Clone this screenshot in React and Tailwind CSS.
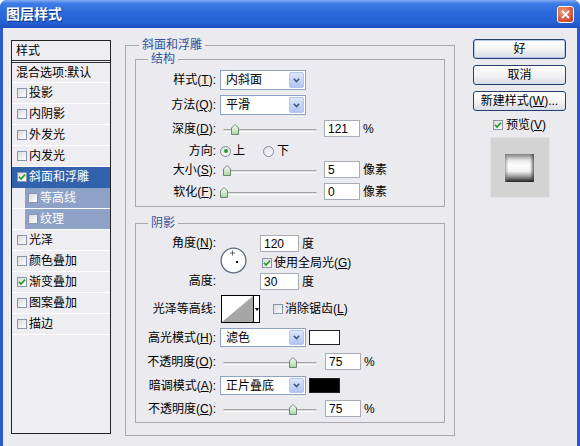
import React from 'react';

const F = "font-['Liberation_Sans','Noto_Sans_CJK_SC',sans-serif]";

function Box({ on, className = '' }) {
  return (
    <span className={`flex h-[10px] w-[10px] shrink-0 items-center justify-center border border-[#8796ac] bg-linear-to-br from-[#dadada] to-white ${className}`}>
      {on && (
        <svg width="8" height="8" viewBox="0 0 8 8">
          <path d="M1 3.8 L3 6 L7 1.6" fill="none" stroke="#22a12a" strokeWidth="1.7" />
        </svg>
      )}
    </span>
  );
}

function Radio({ on, className = '' }) {
  return (
    <span className={`flex h-[11px] w-[11px] shrink-0 items-center justify-center rounded-full border border-[#7b8ba3] bg-linear-to-br from-[#dcdcdc] to-white ${className}`}>
      {on && <span className="h-[4px] w-[4px] rounded-full bg-[#2a9a2e]" />}
    </span>
  );
}

function Field({ value, className = 'w-[36px]' }) {
  return (
    <div className={`flex h-[17px] shrink-0 items-center border border-[#a7adb6] bg-white pl-[3px] text-[12px] leading-none ${className}`}>
      {value}
    </div>
  );
}

function Select({ value, className = 'h-[20px]' }) {
  return (
    <div className={`flex w-[86px] shrink-0 border border-[#8ea3c0] bg-white ${className}`}>
      <span className="flex flex-1 items-center pl-[5px]">{value}</span>
      <span className="m-[1px] flex w-[15px] items-center justify-center rounded-[2px] border border-[#b4c6ee] bg-linear-to-b from-[#dde7fc] to-[#b0c5f0]">
        <svg width="7" height="5" viewBox="0 0 7 5">
          <path d="M0.8 0.8 L3.5 3.6 L6.2 0.8" fill="none" stroke="#3e5683" strokeWidth="1.5" />
        </svg>
      </span>
    </div>
  );
}

function Slider({ at }) {
  return (
    <div className="relative h-[17px] w-[97px] shrink-0">
      <div className="absolute left-[3px] right-0 top-[9px] h-[3px] rounded-full border-t border-[#a3a3a6] border-b border-b-white bg-[#dadada]" />
      <svg className="absolute top-[4px]" style={{ left: at - 4 }} width="8" height="11" viewBox="0 0 8 11">
        <defs>
          <linearGradient id="thumb" x1="0" y1="0" x2="0" y2="1">
            <stop offset="0" stopColor="#ffffff" />
            <stop offset="1" stopColor="#a9d4a2" />
          </linearGradient>
        </defs>
        <path d="M0.5 4 L4 0.5 L7.5 4 L7.5 10.5 L0.5 10.5 Z" fill="url(#thumb)" stroke="#6d8773" />
      </svg>
    </div>
  );
}

function Btn({ children, def }) {
  return (
    <div
      className={`flex h-[20px] w-[93px] items-center justify-center rounded-[3px] border border-[#25406f] bg-[linear-gradient(to_bottom,#ffffff,#f2f2f2_55%,#d6dce8)] ${
        def ? 'shadow-[inset_0_0_0_1px_#b2c8ee]' : ''
      }`}
    >
      {children}
    </div>
  );
}

const items = [
  { t: '投影' },
  { t: '内阴影' },
  { t: '外发光' },
  { t: '内发光' },
  { t: '斜面和浮雕', on: true, sel: true },
  { t: '等高线', sub: true },
  { t: '纹理', sub: true },
  { t: '光泽' },
  { t: '颜色叠加' },
  { t: '渐变叠加', on: true },
  { t: '图案叠加' },
  { t: '描边' },
];

function StyleList() {
  return (
    <div className="flex h-[394px] w-[100px] shrink-0 flex-col border border-[#222] bg-[#eeedf1]">
      <div className="flex h-[20px] items-center border-b border-[#333] pl-[4px]">样式</div>
      <div className="mt-[1px] flex h-[21px] items-center border-t border-[#333] border-b border-b-white pl-[4px]">混合选项:默认</div>
      {items.map((it) =>
        it.sub ? (
          <div key={it.t} className="flex h-[21px] border-b border-white pl-[13px]">
            <div className="flex flex-1 items-center bg-[#8ea1c6] pl-[3px] text-white">
              <Box />
              <span className="ml-[2px]">{it.t}</span>
            </div>
          </div>
        ) : (
          <div
            key={it.t}
            className={`flex h-[21px] items-center border-b pl-[5px] ${
              it.sel ? 'border-[#3162ab] bg-[#3162ab] text-white' : 'border-white'
            }`}
          >
            <Box on={it.on} />
            <span className="ml-[2px]">{it.t}</span>
          </div>
        )
      )}
    </div>
  );
}

function Label({ children }) {
  return <span className="w-[80px] shrink-0 text-right">{children}</span>;
}

export default function App() {
  return (
    <div className={`${F} flex h-[446px] w-[580px] flex-col overflow-hidden rounded-t-[7px] bg-[#2a5bcc] text-[12px] text-black`}>
      <div className="flex h-[28px] shrink-0 items-center justify-between bg-[linear-gradient(to_bottom,#83acf2_0%,#3e7ce6_12%,#2b69dc_45%,#2462d6_80%,#1c50c0_100%)] pl-[6px] pr-[6px]">
        <span className="text-[14px] font-bold text-white [text-shadow:1px_1px_0_#0d2f86]">图层样式</span>
        <span className="flex h-[17px] w-[17px] items-center justify-center rounded-[3px] border border-white bg-[radial-gradient(circle_at_35%_30%,#f29a7a,#d9573a_60%,#b8401f)]">
          <svg width="9" height="9" viewBox="0 0 9 9">
            <path d="M1 1 L8 8 M8 1 L1 8" stroke="#fff" strokeWidth="1.8" />
          </svg>
        </span>
      </div>

      <div className="mx-[3px] flex flex-1 bg-[#ebeaee] pl-[8px] pt-[12px]">
        <StyleList />

        {/* middle panel */}
        <fieldset className="ml-[14px] mt-[-2px] h-fit w-[330px] shrink-0 border border-[#a9a8ad] px-[9px] pb-[12px]">
          <legend className="ml-[4px] bg-[#ebeaee] px-[3px] leading-[14px] text-[#2f55a0]">斜面和浮雕</legend>

          <fieldset className="border border-[#a9a8ad] pb-[6px] pt-[4px]">
            <legend className="ml-[12px] bg-[#ebeaee] px-[3px] leading-[14px] text-[#2f55a0]">结构</legend>
            <div className="flex h-[20px] items-center">
              <Label>样式(<u>T</u>):</Label>
              <Select value="内斜面" className="ml-[4px] h-[20px]" />
            </div>
            <div className="mt-[5px] flex h-[20px] items-center">
              <Label>方法(<u>Q</u>):</Label>
              <Select value="平滑" className="ml-[4px] h-[20px]" />
            </div>
            <div className="mt-[5px] flex h-[17px] items-center">
              <Label>深度(<u>D</u>):</Label>
              <div className="ml-[4px]"><Slider at={15} /></div>
              <Field value="121" className="ml-[7px] w-[36px]" />
              <span className="ml-[3px]">%</span>
            </div>
            <div className="mt-[4px] flex h-[20px] items-center">
              <Label>方向:</Label>
              <Radio on className="ml-[4px]" />
              <span className="ml-[2px]">上</span>
              <Radio className="ml-[18px]" />
              <span className="ml-[3px]">下</span>
            </div>
            <div className="flex h-[17px] items-center">
              <Label>大小(<u>S</u>):</Label>
              <div className="ml-[4px]"><Slider at={7} /></div>
              <Field value="5" className="ml-[7px] w-[36px]" />
              <span className="ml-[3px]">像素</span>
            </div>
            <div className="mt-[5px] flex h-[17px] items-center">
              <Label>软化(<u>F</u>):</Label>
              <div className="ml-[4px]"><Slider at={4} /></div>
              <Field value="0" className="ml-[7px] w-[36px]" />
              <span className="ml-[3px]">像素</span>
            </div>
          </fieldset>

          <fieldset className="mt-[9px] border border-[#a9a8ad] pb-[5px] pt-[5px]">
            <legend className="ml-[12px] bg-[#ebeaee] px-[3px] leading-[14px] text-[#2f55a0]">阴影</legend>
            <div className="flex h-[55px]">
              <div className="flex w-[80px] shrink-0 flex-col justify-between text-right">
                <span className="leading-[17px]">角度(<u>N</u>):</span>
                <span className="leading-[17px]">高度:</span>
              </div>
              <svg className="ml-[4px] mt-[12px] shrink-0" width="27" height="27" viewBox="0 0 27 27">
                <circle cx="13.5" cy="13.5" r="12.4" fill="#fff" stroke="#5d6b7e" strokeWidth="1.3" />
                <path d="M12.5 3.5 V8.5 M10 6 H15" stroke="#555" strokeWidth="0.9" />
                <rect x="16" y="14" width="2" height="2" fill="#111" />
              </svg>
              <div className="ml-[13px] flex flex-col">
                <div className="flex h-[17px] items-center">
                  <Field value="120" className="w-[39px]" />
                  <span className="ml-[3px]">度</span>
                </div>
                <div className="flex h-[21px] items-center">
                  <Box on className="ml-[2px]" />
                  <span className="ml-[2px]">使用全局光(<u>G</u>)</span>
                </div>
                <div className="flex h-[17px] items-center">
                  <Field value="30" className="w-[39px]" />
                  <span className="ml-[3px]">度</span>
                </div>
              </div>
            </div>

            <div className="mt-[5px] flex h-[28px] items-center">
              <Label>光泽等高线:</Label>
              <div className="ml-[5px] flex h-[28px] border border-black bg-white">
                <svg width="31" height="26" viewBox="0 0 31 26">
                  <polygon points="0,26 31,0 31,26" fill="#a6a6a6" />
                </svg>
                <div className="flex w-[6px] items-center justify-center border-l border-black">
                  <svg width="4" height="3" viewBox="0 0 4 3">
                    <polygon points="0,0 4,0 2,3" fill="#000" />
                  </svg>
                </div>
              </div>
              <Box className="ml-[13px]" />
              <span className="ml-[2px]">消除锯齿(<u>L</u>)</span>
            </div>

            <div className="mt-[5px] flex h-[19px] items-center">
              <Label>高光模式(<u>H</u>):</Label>
              <Select value="滤色" className="ml-[4px] h-[19px]" />
              <div className="ml-[3px] h-[15px] w-[31px] border border-[#222] bg-white" />
            </div>
            <div className="mt-[6px] flex h-[17px] items-center">
              <Label>不透明度(<u>O</u>):</Label>
              <div className="ml-[4px]"><Slider at={73} /></div>
              <Field value="75" className="ml-[8px] w-[36px]" />
              <span className="ml-[3px]">%</span>
            </div>
            <div className="mt-[6px] flex h-[19px] items-center">
              <Label>暗调模式(<u>A</u>):</Label>
              <Select value="正片叠底" className="ml-[4px] h-[19px]" />
              <div className="ml-[3px] h-[15px] w-[31px] border border-[#222] bg-black" />
            </div>
            <div className="mt-[5px] flex h-[17px] items-center">
              <Label>不透明度(<u>C</u>):</Label>
              <div className="ml-[4px]"><Slider at={73} /></div>
              <Field value="75" className="ml-[8px] w-[36px]" />
              <span className="ml-[3px]">%</span>
            </div>
          </fieldset>
        </fieldset>

        {/* buttons */}
        <div className="ml-[18px] mt-[-1px] flex w-[93px] shrink-0 flex-col items-center">
          <Btn def>好</Btn>
          <div className="mt-[6px]"><Btn>取消</Btn></div>
          <div className="mt-[6px]"><Btn>新建样式(<u>W</u>)...</Btn></div>
          <div className="mt-[6px] flex h-[16px] items-center">
            <Box on />
            <span className="ml-[3px]">预览(<u>V</u>)</span>
          </div>
          <div className="mt-[4px] flex h-[61px] w-[60px] items-center justify-center border border-[#e2e2e4] bg-[#d3d3d3]">
            <svg width="29" height="28" viewBox="0 0 29 28">
              <defs>
                <linearGradient id="bv" x1="0" y1="0" x2="0" y2="1">
                  <stop offset="0" stopColor="#7f7f7f" />
                  <stop offset="0.22" stopColor="#e6e6e6" />
                  <stop offset="0.4" stopColor="#ffffff" />
                  <stop offset="0.62" stopColor="#f2f2f2" />
                  <stop offset="0.8" stopColor="#9a9a9a" />
                  <stop offset="1" stopColor="#222" />
                </linearGradient>
                <linearGradient id="bh" x1="0" y1="0" x2="1" y2="0">
                  <stop offset="0" stopColor="#777" stopOpacity="0.6" />
                  <stop offset="0.12" stopColor="#777" stopOpacity="0" />
                  <stop offset="0.86" stopColor="#333" stopOpacity="0" />
                  <stop offset="1" stopColor="#333" stopOpacity="0.7" />
                </linearGradient>
              </defs>
              <rect x="0" y="0" width="29" height="28" fill="url(#bv)" />
              <rect x="0" y="0" width="29" height="28" fill="url(#bh)" />
            </svg>
          </div>
        </div>
      </div>
    </div>
  );
}
